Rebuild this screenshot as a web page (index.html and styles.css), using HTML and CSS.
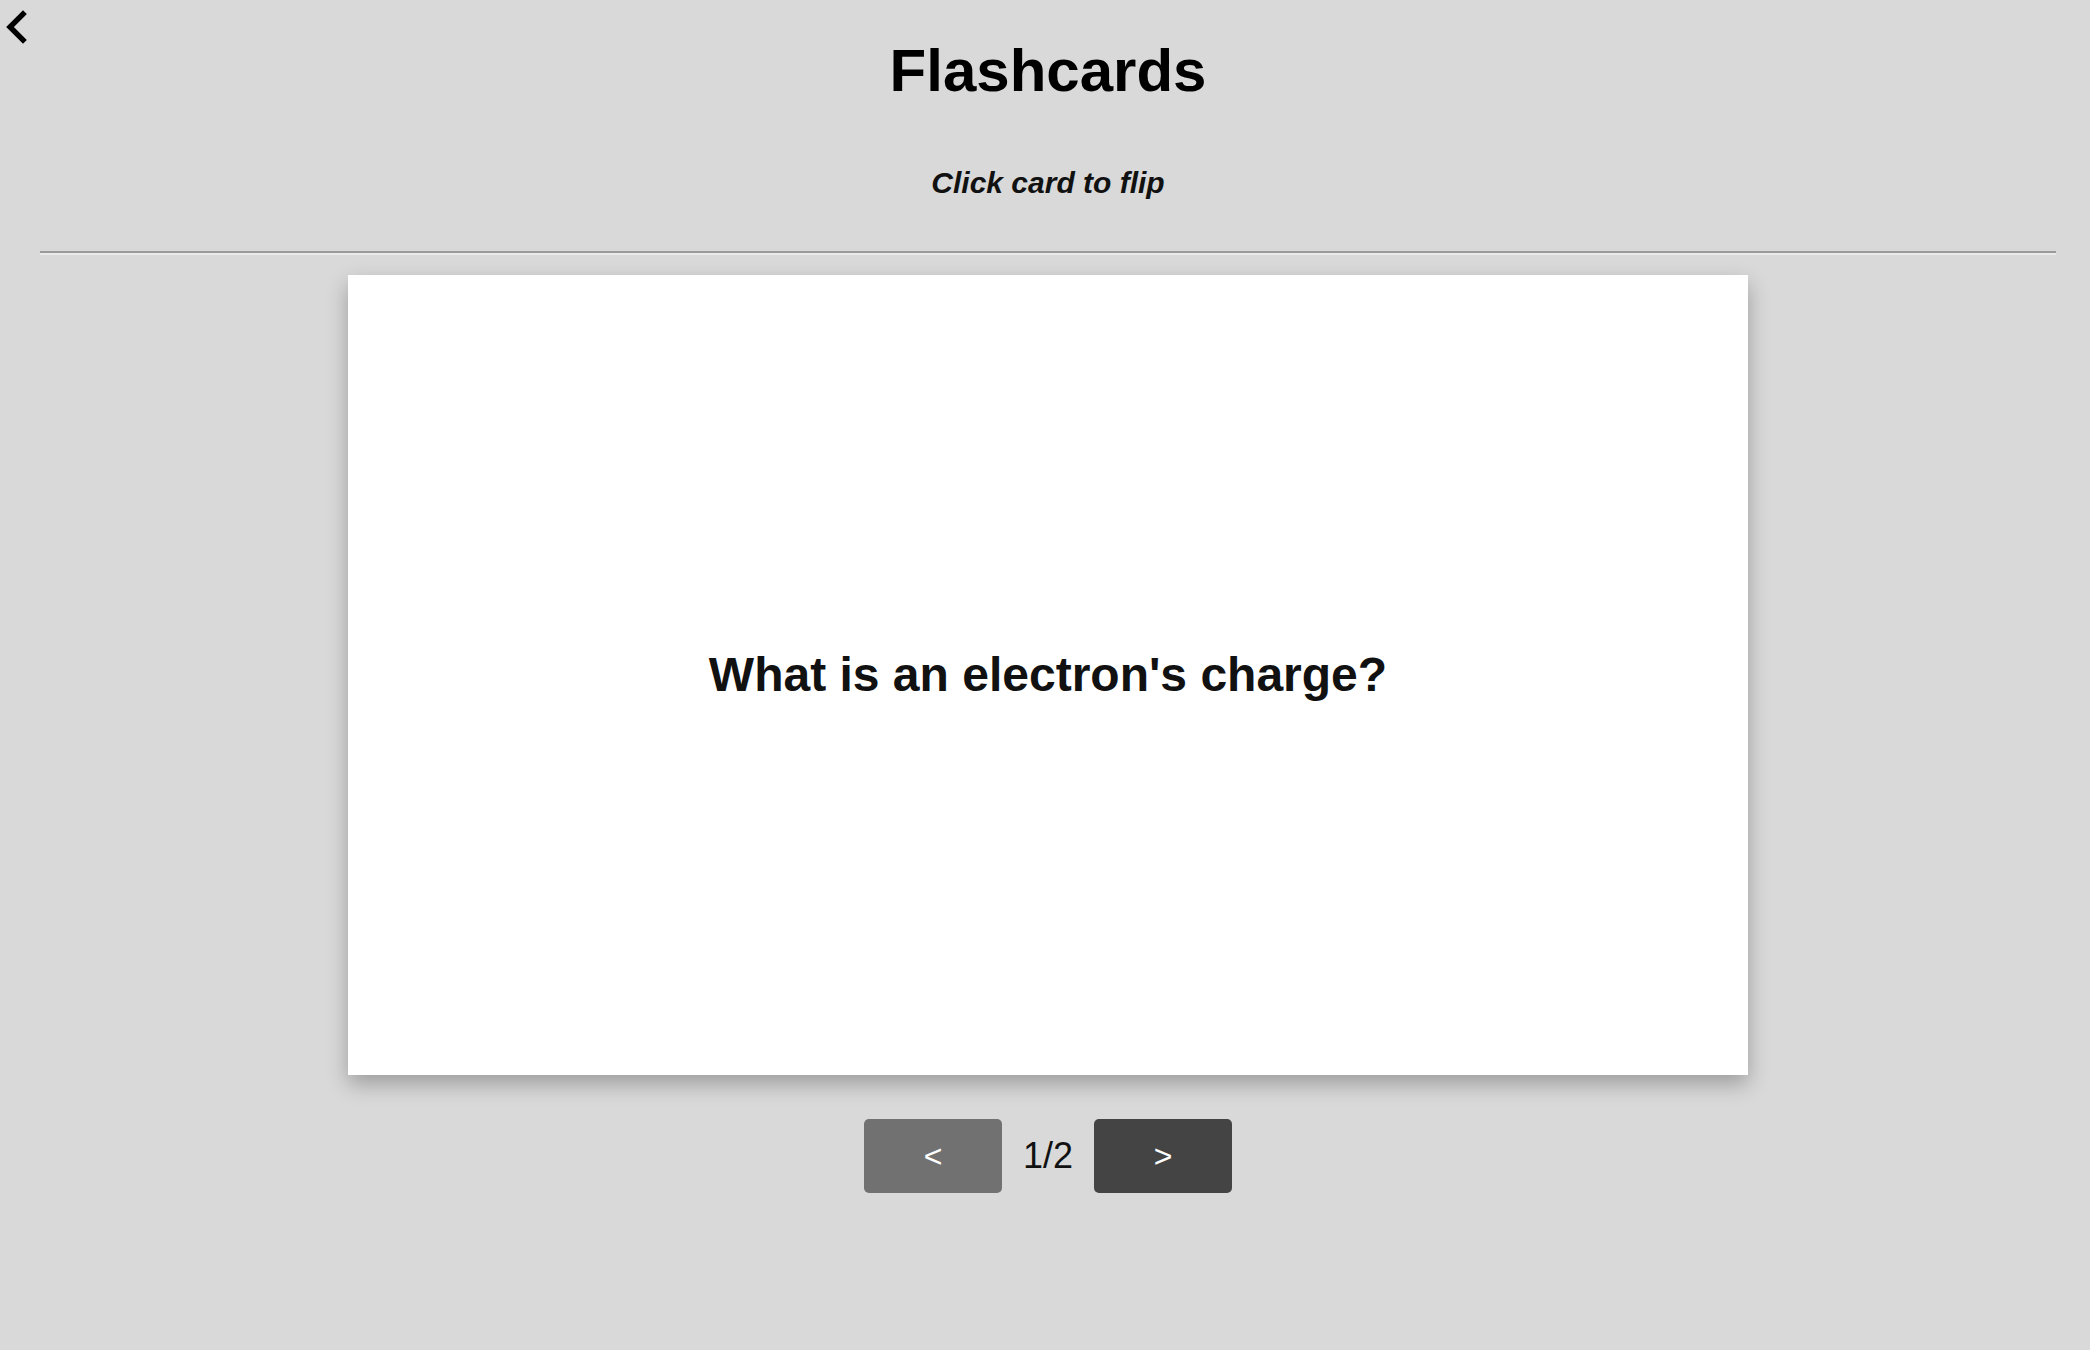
FILE: index.html
```html
<!DOCTYPE html>
<html lang="en">
<head>
<meta charset="utf-8">
<title>Flashcards</title>
<link rel="stylesheet" href="styles.css">
</head>
<body>
<button class="back" aria-label="Back">
  <svg width="24" height="34" viewBox="0 0 24 34"><path d="M19 4 L6 17 L19 30" fill="none" stroke="#000" stroke-width="5.4" stroke-linecap="square" stroke-linejoin="miter"/></svg>
</button>
<main class="page">
  <header class="header">
    <h1 class="title">Flashcards</h1>
    <p class="hint">Click card to flip</p>
  </header>
  <hr class="divider">
  <section class="card">
    <p class="question">What is an electron's charge?</p>
  </section>
  <nav class="pager">
    <button class="btn btn-prev">&lt;</button>
    <span class="count">1/2</span>
    <button class="btn btn-next">&gt;</button>
  </nav>
</main>
</body>
</html>
```
FILE: styles.css
```css
html, body {
  margin: 0;
  padding: 0;
}
body {
  background: #d9d9d9;
  font-family: "Liberation Sans", Arial, Helvetica, sans-serif;
  color: #000;
  width: 2090px;
  height: 1350px;
  position: relative;
  overflow: hidden;
}
.back {
  position: absolute;
  left: 4px;
  top: 10px;
  padding: 0;
  margin: 0;
  border: 0;
  background: transparent;
  width: 24px;
  height: 34px;
  display: block;
}
.back svg { display: block; }
.page {
  margin: 0 34px 0 40px;
  display: flex;
  flex-direction: column;
  align-items: center;
}
.header {
  width: 100%;
  text-align: center;
  padding-top: 36px;
}
.title {
  margin: 0;
  font-size: 60px;
  line-height: 70px;
  font-weight: 700;
}
.hint {
  margin: 59px 0 0;
  font-size: 30px;
  line-height: 36px;
  font-weight: 700;
  font-style: italic;
  color: #111;
}
.divider {
  width: 100%;
  margin: 50px 0 0;
  height: 0;
  border: 0;
  border-top: 2px solid #9a9a9a;
  border-bottom: 2px solid #ebebeb;
}
.card {
  margin-top: 20px;
  width: 1400px;
  height: 800px;
  background: #fff;
  box-shadow: 0 9px 20px rgba(0, 0, 0, 0.28);
  display: flex;
  align-items: center;
  justify-content: center;
}
.question {
  margin: 0;
  font-size: 48px;
  line-height: 56px;
  font-weight: 700;
  color: #111;
}
.pager {
  margin-top: 44px;
  display: flex;
  align-items: center;
  gap: 21px;
}
.btn {
  width: 138px;
  height: 74px;
  border: 0;
  border-radius: 5px;
  color: #fff;
  font-family: "Liberation Sans", Arial, sans-serif;
  font-size: 32px;
  padding: 0;
}
.btn-prev { background: #717171; }
.btn-next { background: #444444; }
.count {
  font-size: 36px;
  color: #111;
}
```
